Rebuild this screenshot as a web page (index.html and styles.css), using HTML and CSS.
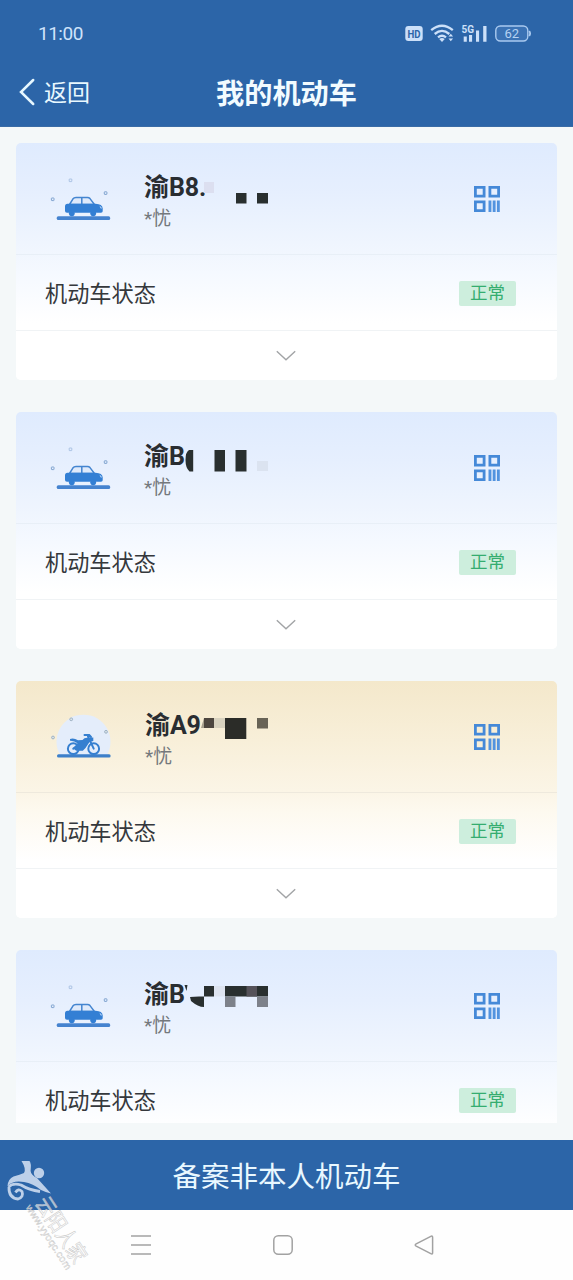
FILE: index.html
```html
<!DOCTYPE html>
<html lang="zh-CN">
<head>
<meta charset="utf-8">
<title>我的机动车</title>
<link rel="stylesheet" href="styles.css">
</head>
<body>
<svg class="defs" aria-hidden="true">
  <symbol id="car" viewBox="0 0 64 48">
    <g fill="none" stroke="#7fa3cf" stroke-width="1"><rect x="21.2" y="5" width="2.6" height="2.6" rx=".4" opacity=".55"/><rect x="56.3" y="17.8" width="2.6" height="2.6" rx=".4"/><rect x="3.4" y="24" width="2.6" height="2.6" rx=".4"/></g>
    <rect x="8.7" y="42.3" width="53.5" height="3.8" rx="1.6" fill="#4583cf"/>
    <path d="M21.5 30.5 25 24.8Q26 23.4 28 23.4H39.5Q41 23.4 42 24.6L46.5 30.5ZM33.8 23.4V30.5" fill="#dfeafb" stroke="#4485d0" stroke-width="1.5"/>
    <path d="M19.5 29.7H47.5Q54.5 30 54.7 34.5V37.3Q54.7 38.7 53 38.7H19Q17 38.7 17 37V32.5Q17 29.7 19.5 29.7Z" fill="#337fd4"/>
    <path d="M51.5 31.5 53.7 33.4V35Q51.8 34.5 51.5 31.5Z" fill="#a9cbf3"/>
    <circle cx="23.8" cy="39.3" r="2.9" fill="#337fd4"/><circle cx="45.2" cy="39.3" r="2.9" fill="#337fd4"/>
  </symbol>
  <symbol id="moto" viewBox="0 0 64 48">
    <path d="M12 43A27 27 0 1 1 59 43Z" fill="#e4edfb"/>
    <g fill="#dde5ea" stroke="#9eb2c4" stroke-width="1"><circle cx="23.2" cy="7.3" r="1.4"/><circle cx="58" cy="19.8" r="1.4"/><circle cx="5" cy="25.5" r="1.4"/></g>
    <rect x="9" y="42.2" width="53.6" height="3.2" rx="1.5" fill="#3c7fca"/>
    <g fill="none" stroke="#357fd0" stroke-width="2"><circle cx="25.3" cy="36.7" r="5.4"/><circle cx="45.7" cy="36.7" r="5.4"/><path d="M45.7 36.7 40 24.5M36.5 23H41.2L43 25M25.3 36.7 31 33" stroke-linecap="round"/></g>
    <path d="M22 27Q26 25.8 30 28.3L34.5 28Q36.5 25 41 25.8L45.3 25.5V29L41.5 30 37.5 36 34.8 38.8H28.2L25 36.3 29.5 31.3Q26 28.5 22 28.8Z" fill="#357fd0"/>
  </symbol>
  <symbol id="qr" viewBox="0 0 26 26">
    <g fill="none" stroke="#4589d8" stroke-width="2.8"><path d="M1.4 1.4H10.1V10.1H1.4ZM15.9 1.4H24.6V10.1H15.9ZM1.4 15.9H10.1V24.6H1.4Z"/></g>
    <path d="M14.5 14.5H17.4V26H14.5ZM18.7 14.5H21.6V26H18.7ZM22.9 14.5H25.8V26H22.9Z" fill="#5293df"/>
  </symbol>
  <symbol id="down" viewBox="0 0 20 12"><path d="M.8 1.2 10 9.8 19.2 1.2" fill="none" stroke="#a2a4a6" stroke-width="1.4"/></symbol>
</svg>

<div class="screen">
  <header class="top">
    <div class="status">
      <span class="clock">11:00</span>
      <svg class="signals" viewBox="0 0 128 24" width="128" height="24">
        <rect x="1.3" y="4" width="17.4" height="15" rx="3" fill="#cce0f9"/>
        <text x="10" y="15.8" class="hd" textLength="13" lengthAdjust="spacingAndGlyphs">HD</text>
        <g fill="none" stroke="#cce0f9" stroke-width="2.3"><path d="M27.2 8.2Q38 -.8 48.8 8.2M30.7 12Q38 5.8 45.3 12M34 15.4Q38 12.2 42 15.4"/></g>
        <path d="M35.2 17Q38 15 40.8 17L38 20ZM44.5 14.5 46.8 11.8 49.1 14.5ZM44.5 16.5H49.1L46.8 19.2Z" fill="#cce0f9"/>
        <text x="57.6" y="10.6" class="five">5G</text>
        <path d="M59.7 14.5H62.8V19.7H59.7ZM65 13H68.1V19.7H65ZM72 8.5H75.1V19.7H72ZM79.2 4H82.5V19.7H79.2Z" fill="#cce0f9"/>
        <rect x="91.8" y="4" width="32" height="15" rx="4.5" fill="#3b72b4" stroke="#a9c9ef" stroke-width="1.4"/>
        <path d="M125.2 9Q127 11.5 125.2 14" fill="none" stroke="#a9c9ef" stroke-width="1.8"/>
        <text x="107.8" y="16.2" class="power">62</text>
      </svg>
    </div>
    <nav class="titlebar">
      <a class="back"><svg viewBox="0 0 18 28" width="18" height="28"><path d="M15.2 2 3 14 15.2 26" fill="none" stroke="#e6f7ff" stroke-width="2.5" stroke-linecap="round"/></svg><span>返回</span></a>
      <h1>我的机动车</h1>
    </nav>
  </header>

  <main class="list">
    <article class="card">
      <section class="vehicle">
        <svg class="pic"><use href="#car"/></svg>
        <div class="who"><b>渝B8.</b><span>*忧</span></div>
        <svg class="qr"><use href="#qr"/></svg>
        <svg class="mask" viewBox="0 0 160 50"><path d="M60 14H70V25H60Z" fill="#dcdff0"/><path d="M92 25H102.5V35.5H92ZM113 25H124V35.5H113Z" fill="#292f2f"/></svg>
      </section>
      <section class="state"><span>机动车状态</span><em>正常</em></section>
      <div class="more"><svg><use href="#down"/></svg></div>
    </article>
    <article class="card">
      <section class="vehicle">
        <svg class="pic"><use href="#car"/></svg>
        <div class="who"><b>渝B</b><span>*忧</span></div>
        <svg class="qr"><use href="#qr"/></svg>
        <svg class="mask" viewBox="0 0 160 50"><path d="M49.2 13H45Q41.5 15 41.5 23T45.5 34.5H49.2ZM70.5 13H81V34.5H70.5ZM91.5 13H102.5V34.5H91.5Z" fill="#292f2f"/><path d="M113 24H124V34H113Z" fill="#dbe3f0"/></svg>
      </section>
      <section class="state"><span>机动车状态</span><em>正常</em></section>
      <div class="more"><svg><use href="#down"/></svg></div>
    </article>
    <article class="card gold">
      <section class="vehicle">
        <svg class="pic"><use href="#moto"/></svg>
        <div class="who"><b>渝A9</b><span>*忧</span></div>
        <svg class="qr"><use href="#qr"/></svg>
        <svg class="mask" viewBox="0 0 160 50"><path d="M57 22 60 12H70V22Z" fill="#a69f8d"/><path d="M60 12H70V22H60Z" fill="#4d463f"/><path d="M70 12H81V22H70Z" fill="#d8d2bf"/><path d="M81 12H102.3V33H81Z" fill="#2b2c28"/><path d="M113 12H124V22.5H113Z" fill="#686356"/></svg>
      </section>
      <section class="state"><span>机动车状态</span><em>正常</em></section>
      <div class="more"><svg><use href="#down"/></svg></div>
    </article>
    <article class="card">
      <section class="vehicle">
        <svg class="pic"><use href="#car"/></svg>
        <div class="who"><b>渝B</b><span>*忧</span></div>
        <svg class="qr"><use href="#qr"/></svg>
        <svg class="mask" viewBox="0 0 160 50"><path d="M40.5 10H43.5L42.5 16ZM60 11H70V21.5H60V32Q54 32 47 26L46 22 55 21.5H60ZM81 11H124V21.5H81Z" fill="#292f2f"/><path d="M70 11H81V21.5H70Z" fill="#dde3ef"/><path d="M102.5 11H113V21.5H102.5Z" fill="#555259"/><path d="M81 21.5H91.5V32H81ZM113 21.5H124V32H113Z" fill="#7d818a"/></svg>
      </section>
      <section class="state"><span>机动车状态</span><em>正常</em></section>
      <div class="more"><svg><use href="#down"/></svg></div>
    </article>
  </main>

  <div class="gap"></div>
  <button class="record">备案非本人机动车</button>
  <footer class="keys">
    <svg viewBox="0 0 22 22"><path d="M1 2H21M1 11H21M1 20H21" /></svg>
    <svg viewBox="0 0 22 22"><rect x="1.8" y="1.8" width="18.4" height="18.4" rx="4.5"/></svg>
    <svg viewBox="0 0 22 22"><path d="M19.6 3.3V18.7Q19.6 20.6 17.8 19.7L3.2 12.2Q1.3 11 3.2 9.8L17.8 2.3Q19.6 1.4 19.6 3.3Z"/></svg>
  </footer>

  <svg class="watermark" viewBox="0 0 110 125" width="110" height="125">
    <g fill="#bdd0e9">
      <path d="M21.5 6H29.5Q31.5 8 30.6 16 31 20 37 23L51 38.5Q46 37.5 41 35 33 28.5 24 27 13 25 7.5 31 8 24 13.5 21.5 20 19.5 24 18 26.5 14 21.5 6Z"/>
      <circle cx="39" cy="18" r="5.2"/>
    </g>
    <path d="M9 32Q8.5 43 18 44 24 42 22 36.5 18 33 15.5 37.5M8.5 32Q13 27.5 21 30 29 35 40 36.5" fill="none" stroke="#bdd0e9" stroke-width="2.8"/>
    <g transform="translate(34.5 48) rotate(57)"><text x="0" y="0" class="brand" textLength="74" lengthAdjust="spacingAndGlyphs">云阳人家</text></g>
    <g transform="translate(25.5 52.5) rotate(57)"><text x="0" y="0" class="url" textLength="75">www.yyoqc.com</text></g>
  </svg>
</div>
</body>
</html>
```
FILE: styles.css
```css
* { box-sizing: border-box; }
body { margin: 0; font-family: Roboto, "Noto Sans CJK SC", sans-serif; color: #35383c; }
.defs { position: absolute; width: 0; height: 0; }
.screen { position: relative; width: 573px; height: 1280px; display: flex; flex-direction: column; overflow: hidden; background: #f4f8f9; }

.top { height: 127px; flex: none; background: #2c65a8; border-bottom: 1px solid #3a6ca6; }
.status { height: 66px; padding: 1px 41px 0 38px; display: flex; align-items: center; justify-content: space-between; }
.clock { font-size: 19px; letter-spacing: -.5px; color: #cfe3fb; }
.hd, .five, .power { font-family: Roboto, sans-serif; fill: #cce0f9; }
.hd { font-size: 11.5px; font-weight: 700; text-anchor: middle; fill: #2c65a8; }
.five { font-size: 10px; font-weight: 700; }
.power { font-size: 13px; text-anchor: middle; fill: #b5d1f2; }
.titlebar { height: 54px; display: grid; grid-template-columns: 1fr auto 1fr; align-items: center; color: #e9f8ff; }
.back { display: flex; align-items: center; gap: 8px; padding-left: 18px; font-size: 23px; line-height: 30px; }
.back svg { margin-top: -2px; }
.back span { padding-top: 2px; }
.titlebar h1 { margin: 0; padding-top: 4px; font-size: 28.2px; line-height: 40px; font-weight: 700; color: #f2fbff; }

.list { height: 996px; flex: none; padding: 16px 16px 0; display: flex; flex-direction: column; gap: 32px; overflow: hidden; }
.card { height: 237px; flex: none; border-radius: 5px; overflow: hidden; background: linear-gradient(#dfebfe 0, #e6effe 50px, #eff5fe 100px, #f5f9ff 130px, #fff 180px); }
.vehicle { position: relative; height: 112px; display: flex; align-items: flex-start; padding: 31px 57px 0 32px; border-bottom: 1px solid #e8eff7; }
.pic { width: 64px; height: 48px; flex: none; }
.who { flex: 1; padding: 1px 0 0 32px; display: flex; flex-direction: column; }
.who b { font-size: 25px; line-height: 26px; color: #292d31; font-weight: 700; white-space: nowrap; letter-spacing: -.1px; }
.who span { font-size: 19px; line-height: 24px; margin-top: 6px; color: #74787c; }
.qr { width: 26px; height: 26px; flex: none; margin-top: 12px; }
.mask { position: absolute; left: 128px; top: 25px; width: 160px; height: 50px; }
.state { height: 76px; display: flex; align-items: center; justify-content: space-between; padding: 1px 41px 0 29px; border-bottom: 1px solid #f0f3f5; }
.state span { font-size: 22.2px; line-height: 30px; padding-top: 2px; }
.state em { width: 57px; height: 25px; border-radius: 2px; background: #cdeedd; color: #35ad70; font-size: 17.5px; font-style: normal; line-height: 25px; text-align: center; }
.more { height: 49px; display: flex; align-items: center; justify-content: center; background: #fff; }
.more svg { width: 20px; height: 12px; margin-right: 1px; }
.gold { background: linear-gradient(#f4e8cb 0, #f8efd9 60px, #fbf5e6 110px, #fdf9ef 130px, #fff 180px); }
.gold .vehicle { border-color: #eee9dd; }
.gold .who { padding-left: 33px; }

.gap { height: 17px; flex: none; }
.record { height: 70px; flex: none; border: 0; padding: 6px 0 0; background: #2c65a8; color: #e9f8ff; font: 400 28.5px/40px Roboto, "Noto Sans CJK SC", sans-serif; }
.keys { height: 70px; flex: none; padding: 0 138px 0 130px; display: flex; align-items: center; justify-content: space-between; background: #fefefe; }
.keys svg { width: 22px; height: 22px; fill: none; stroke: #a2a2a2; stroke-width: 1.5; }
.watermark { position: absolute; left: 0; top: 1155px; overflow: visible; }
.brand, .url { font-family: "Noto Sans CJK SC", sans-serif; stroke: #c4c4c4; stroke-width: .5; fill: #fff; fill-opacity: .6; }
.brand { font-size: 22px; font-weight: 400; }
.url { font-family: "Liberation Sans", sans-serif; font-size: 10px; stroke-width: .4; }
```
